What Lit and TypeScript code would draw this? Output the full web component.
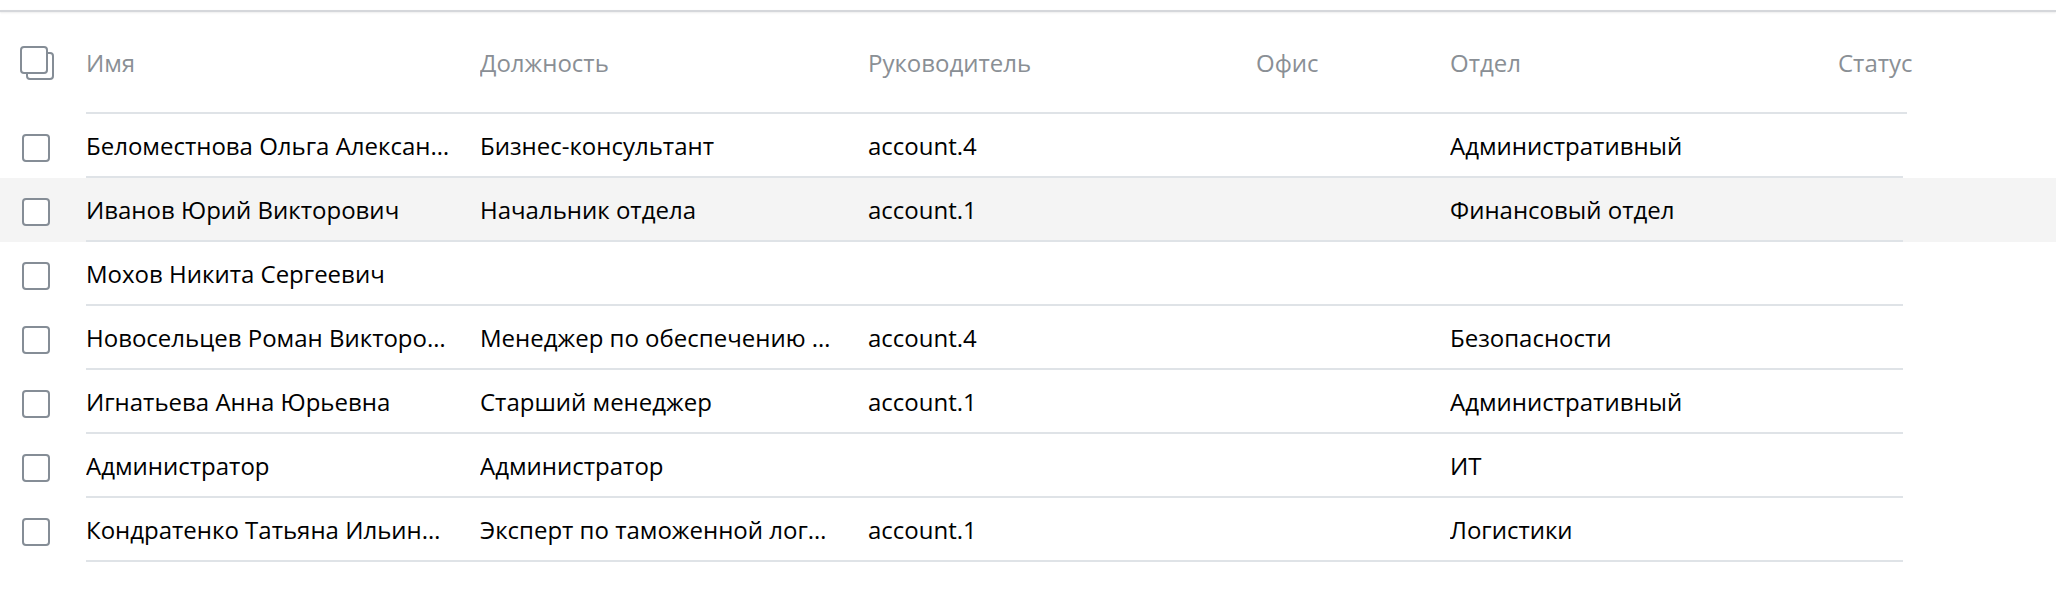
import { LitElement, html, css, svg } from "lit";
import { customElement } from "lit/decorators.js";

const rows = [
  ["Беломестнова Ольга Александровна", "Бизнес-консультант", "account.4", "", "Административный", ""],
  ["Иванов Юрий Викторович", "Начальник отдела", "account.1", "", "Финансовый отдел", ""],
  ["Мохов Никита Сергеевич", "", "", "", "", ""],
  ["Новосельцев Роман Викторович", "Менеджер по обеспечению безопасности", "account.4", "", "Безопасности", ""],
  ["Игнатьева Анна Юрьевна", "Старший менеджер", "account.1", "", "Административный", ""],
  ["Администратор", "Администратор", "", "", "ИТ", ""],
  ["Кондратенко Татьяна Ильинична", "Эксперт по таможенной логистике", "account.1", "", "Логистики", ""],
];
const headers = ["Имя", "Должность", "Руководитель", "Офис", "Отдел", "Статус"];

@customElement("app-root")
export class AppRoot extends LitElement {
  static styles = css`
    :host { display: block; width: 2056px; height: 606px; background: #fff; font-family: "Open Sans", sans-serif; font-size: 24px; color: #000; overflow: hidden; }
    .top { height: 2px; margin-top: 10px; background: #d5d7db; box-shadow: 0 1px 2px rgba(0,0,0,.08); }
    .row { display: grid; grid-template-columns: 86px 394px 388px 388px 194px 388px 1fr; align-items: center; }
    .head { height: 100px; }
    .body { height: 62px; }
    .hover { background: #f4f4f4; }
    .check { display: flex; padding-left: 22px; padding-top: 6px; }
    .headcheck { display: flex; padding-left: 20px; padding-top: 2px; }
    .box { display: block; width: 28px; height: 28px; box-sizing: border-box; border: 2px solid #858d96; border-radius: 4px; background: #fff; }
    .cell { overflow: hidden; white-space: nowrap; text-overflow: ellipsis; padding: 2px 30px 0 0; box-sizing: border-box; line-height: 32px; }
    .rule { height: 2px; background: #dfe3e7; margin-left: 86px; margin-right: 153px; }
    .rule.head-rule { margin-right: 149px; }
    .hc { color: #8a8f95; }
  `;

  render() {
    return html`
      <div class="top"></div>
      <div class="row head">
        <div class="headcheck">
          <svg width="34" height="34" viewBox="0 0 34 34" fill="none" stroke="#858d96" stroke-width="2">
            ${svg`<path d="M28 7h2a3 3 0 0 1 3 3v20a3 3 0 0 1-3 3H10a3 3 0 0 1-3-3v-2"/><rect x="1" y="1" width="26" height="26" rx="3"/>`}
          </svg>
        </div>
        ${headers.map((h) => html`<div class="cell hc">${h}</div>`)}
      </div>
      <div class="rule head-rule"></div>
      ${rows.map(
        (r, i) => html`
          <div class="${i === 1 ? "hover" : ""}">
            <div class="row body">
              <div class="check"><span class="box"></span></div>
              ${r.map((c) => html`<div class="cell">${c}</div>`)}
            </div>
            <div class="rule"></div>
          </div>
        `
      )}
    `;
  }
}
